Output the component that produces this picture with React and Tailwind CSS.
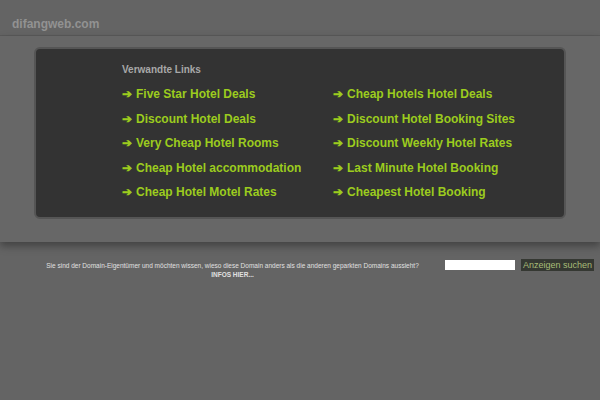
export default function App() {
  const left = [
    "Five Star Hotel Deals",
    "Discount Hotel Deals",
    "Very Cheap Hotel Rooms",
    "Cheap Hotel accommodation",
    "Cheap Hotel Motel Rates",
  ];
  const right = [
    "Cheap Hotels Hotel Deals",
    "Discount Hotel Booking Sites",
    "Discount Weekly Hotel Rates",
    "Last Minute Hotel Booking",
    "Cheapest Hotel Booking",
  ];
  const Link = ({ t }) => (
    <div className="h-[24.5px] flex items-center text-[12px] font-bold text-[#9ccc1e] whitespace-nowrap">
      <span className="mr-[4px]">➔</span>
      {t}
    </div>
  );
  return (
    <div className="w-[600px] h-[400px] bg-[#646464] overflow-hidden" style={{ fontFamily: '"Liberation Sans", Arial, sans-serif' }}>
      <div className="h-[36px] pl-[12px] pt-[15px] text-[12px] font-bold text-[#929292] border-b border-[#5a5a5a]">
        difangweb.com
      </div>
      <div className="h-[206px] bg-[#676767] pt-[11px] px-[34px] shadow-[0_4px_8px_rgba(0,0,0,0.35)] relative">
        <div className="h-[172px] bg-[#333333] rounded-[6px] border-[2px] border-[#555555] pl-[86px] pt-[13px]">
          <div className="text-[10px] font-bold text-[#a8a8a8] h-[14px]">Verwandte Links</div>
          <div className="flex mt-[6px]">
            <div className="w-[211px] shrink-0">
              {left.map((t) => (
                <Link key={t} t={t} />
              ))}
            </div>
            <div>
              {right.map((t) => (
                <Link key={t} t={t} />
              ))}
            </div>
          </div>
        </div>
      </div>
      <div className="flex pt-[19px]">
        <div className="w-[465px] shrink-0 text-center text-[6.5px] text-[#e0e0e0] leading-[9px]">
          <div className="whitespace-nowrap">Sie sind der Domain-Eigentümer und möchten wissen, wieso diese Domain anders als die anderen geparkten Domains aussieht?</div>
          <div className="font-bold">INFOS HIER...</div>
        </div>
        <div className="flex items-start gap-[6px] ml-[-20px] -mt-[2px] shrink-0">
          <div className="w-[70px] h-[10px] bg-white mt-[1px]"></div>
          <div className="h-[12px] px-[2px] bg-[#353832] text-[#a8bd78] text-[9px] leading-[12px] whitespace-nowrap">
            Anzeigen suchen
          </div>
        </div>
      </div>
    </div>
  );
}
